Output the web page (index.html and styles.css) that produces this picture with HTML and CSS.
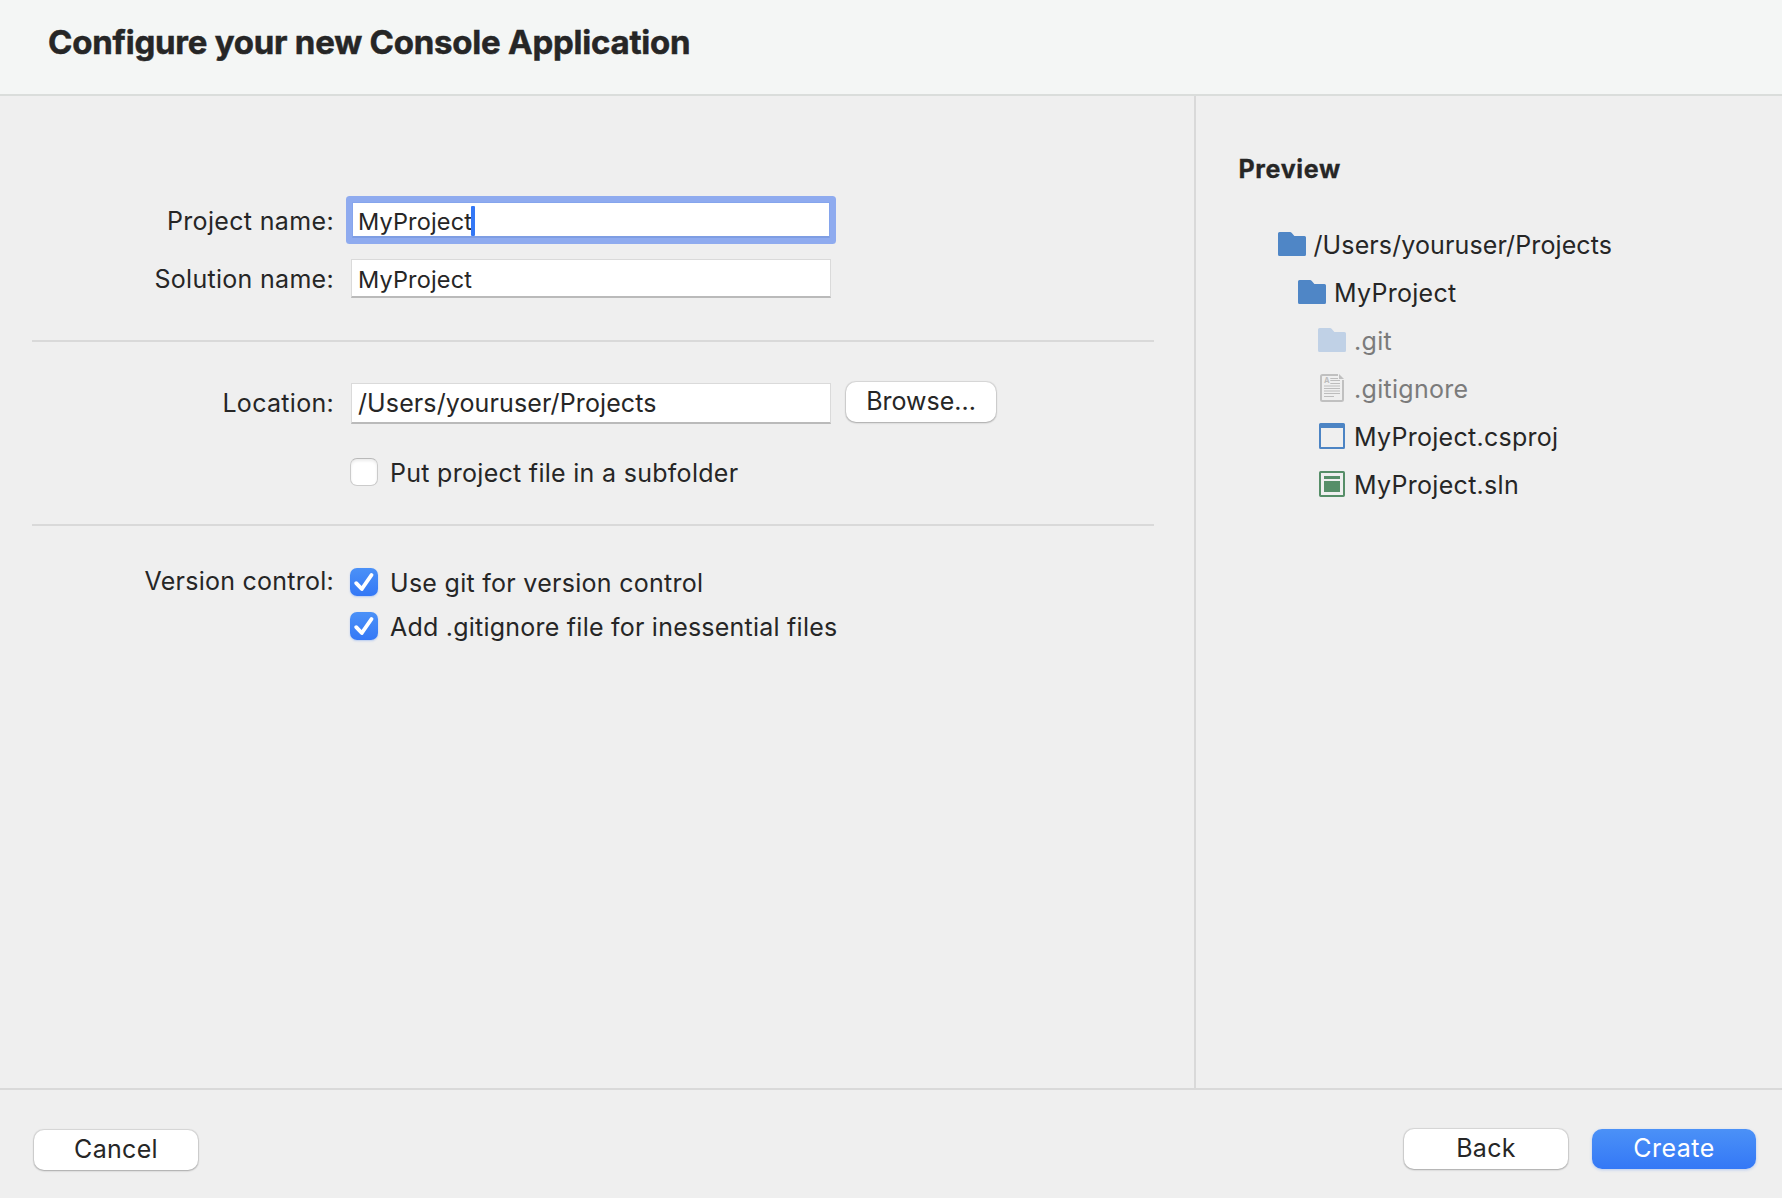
FILE: index.html
```html
<!DOCTYPE html>
<html lang="en">
<head>
<meta charset="utf-8">
<title>Configure your new Console Application</title>
<link rel="stylesheet" href="styles.css">
</head>
<body>
<svg class="defs" width="0" height="0" aria-hidden="true">
  <symbol id="folder" viewBox="0 0 28 28">
    <path d="M1.500 2H12Q13 2 13.800 2.900L16.400 6H26.500Q28 6 28 7.500V24.500Q28 26 26.500 26H1.500Q0 26 0 24.500V3.500Q0 2 1.500 2Z" fill="currentColor"/>
  </symbol>
  <symbol id="check" viewBox="0 0 28 28">
    <path d="M6.200 15.200L11.800 21L21.500 7" fill="none" stroke="#fff" stroke-width="3.900" stroke-linecap="round" stroke-linejoin="round"/>
  </symbol>
</svg>
<div class="window">
  <header class="header"><h1 class="title">Configure your new Console Application</h1></header>
  <main class="main">
    <form class="form">
      <section class="section names">
        <div class="row">
          <label class="label label-project">Project name:</label>
          <div class="field small focused"><span>MyProject</span><i class="caret"></i></div>
        </div>
        <div class="row">
          <label class="label">Solution name:</label>
          <div class="field small"><span>MyProject</span></div>
        </div>
      </section>
      <section class="section location">
        <div class="row">
          <label class="label">Location:</label>
          <div class="field path"><span>/Users/youruser/Projects</span></div>
          <button class="button browse" type="button">Browse...</button>
        </div>
        <div class="option">
          <span class="box"></span>
          <span class="option-text subfolder">Put project file in a subfolder</span>
        </div>
      </section>
      <section class="section version">
        <label class="label label-version">Version control:</label>
        <div class="options">
          <div class="option">
            <span class="box checked"><svg width="28" height="28"><use href="#check"/></svg></span>
            <span class="option-text">Use git for version control</span>
          </div>
          <div class="option">
            <span class="box checked"><svg width="28" height="28"><use href="#check"/></svg></span>
            <span class="option-text ignore">Add .gitignore file for inessential files</span>
          </div>
        </div>
      </section>
    </form>
    <aside class="preview">
      <h2 class="preview-title">Preview</h2>
      <ul class="tree">
        <li class="node depth-0"><svg class="icon folder" width="28" height="28"><use href="#folder"/></svg><span class="name root">/Users/youruser/Projects</span></li>
        <li class="node depth-1"><svg class="icon folder" width="28" height="28"><use href="#folder"/></svg><span class="name">MyProject</span></li>
        <li class="node depth-2 muted"><svg class="icon folder" width="28" height="28"><use href="#folder"/></svg><span class="name git">.git</span></li>
        <li class="node depth-2 muted">
          <svg class="icon" width="28" height="28" viewBox="0 0 28 28">
            <path d="M20 1H4.500Q3 1 3 2.500V25.500Q3 27 4.500 27H23.500Q25 27 25 25.500V6" fill="none" stroke="#c0c0c0" stroke-width="2"/>
            <path d="M21 0L26 5H21Z" fill="#c0c0c0"/>
            <path d="M12.300 4.500H20M12.300 6.500H22M12.300 9.500H22M6 12H22M6 14.500H22M6 17H22M6 19.500H22M6 22.500H16" stroke="#bdbdbd" stroke-width="1.200"/>
            <text class="glyph" x="6" y="9">A</text>
          </svg>
          <span class="name gitignore">.gitignore</span></li>
        <li class="node depth-2">
          <svg class="icon" width="28" height="28" viewBox="0 0 28 28">
            <path d="M2.500 1H25.500Q27 1 27 2.500V25.500Q27 27 25.500 27H2.500Q1 27 1 25.500V2.500Q1 1 2.500 1ZM3 6V25H25V6Z" fill="#4c84c4" fill-rule="evenodd"/>
          </svg>
          <span class="name">MyProject.csproj</span></li>
        <li class="node depth-2">
          <svg class="icon" width="28" height="28" viewBox="0 0 28 28">
            <rect x="2" y="2" width="24" height="24" rx="0.700" fill="none" stroke="#568e68" stroke-width="2"/>
            <path d="M6 6H22V9H6ZM6 11H22V22H6Z" fill="#568e68"/>
          </svg>
          <span class="name sln">MyProject.sln</span></li>
      </ul>
    </aside>
  </main>
  <footer class="footer">
    <button class="button cancel" type="button">Cancel</button>
    <div class="actions">
      <button class="button" type="button">Back</button>
      <button class="button primary" type="button">Create</button>
    </div>
  </footer>
</div>
</body>
</html>
```
FILE: styles.css
```css
* { box-sizing: border-box; }

body {
  margin: 0;
  background: #efefef;
  color: #262626;
  font-family: Inter, "Liberation Sans", sans-serif;
  font-size: 25px;
  line-height: 30px;
  letter-spacing: 0.3px;
  white-space: nowrap;
}

.defs { display: none; }

.window {
  width: 1782px;
  height: 1198px;
  display: grid;
  grid-template-rows: 96px 992px 110px;
  overflow: hidden;
}

.header {
  padding: 22px 48px 0;
  background: #f4f6f5;
  border-bottom: 2px solid #dadddb;
}

.title {
  margin: 0;
  font-size: 33px;
  line-height: 40px;
  font-weight: 700;
  letter-spacing: -0.232px;
  -webkit-text-stroke: 0.5px currentColor;
}

.main {
  display: grid;
  grid-template-columns: 1194px 1fr;
}

.form { padding: 0 40px 0 32px; }

.section { border-bottom: 2px solid #d9d9d9; }

.names { height: 246px; padding-top: 106px; }
.location { height: 184px; padding-top: 41px; }
.version { display: flex; gap: 16px; padding-top: 40px; border-bottom: 0; }

.row { display: flex; align-items: flex-start; }
.names .row + .row { margin-top: 21px; }

.label {
  width: 302px;
  margin-right: 17px;
  padding-top: 5px;
  text-align: right;
}
.label-project { padding-top: 4px; letter-spacing: 0.35px; }
.label-version { margin: 0; padding: 0; letter-spacing: 0.25px; }

.field {
  width: 480px;
  height: 39px;
  padding: 4px 0 0 6px;
  background: #fff;
  border: 1px solid #dadada;
  border-bottom: 2px solid #bababa;
  display: flex;
}
.path { height: 41px; letter-spacing: 0.114px; }
.small {
  padding-top: 5px;
  font-size: 23.5px;
  line-height: 29px;
  letter-spacing: 0.145px;
}
.focused {
  width: 478px;
  height: 36px;
  margin-left: 1px;
  padding: 4px 0 0 5px;
  border: 1px solid #85a5ed;
  border-bottom: 2px solid #7e9de3;
  box-shadow: 0 0 0 6px #8fabef;
  border-radius: 1px;
}
.caret {
  width: 4px;
  height: 30px;
  margin: -1px 0 0 -1px;
  border-radius: 1px;
  background: #3478f6;
}

.button {
  width: 164px;
  height: 40px;
  padding: 4px 0 6px;
  border: 0;
  border-radius: 10px;
  background: #fff;
  box-shadow: 0 0 1px 0.500px rgba(0, 0, 0, 0.1), 0 1px 2px rgba(0, 0, 0, 0.22);
  color: inherit;
  font: inherit;
  letter-spacing: 0.3px;
  text-align: center;
}
.browse { width: 150px; margin: -1px 0 0 15px; letter-spacing: 0; }
.primary {
  background: linear-gradient(#4b91f7, #3478f6);
  box-shadow: 0 1px 3px rgba(52, 120, 246, 0.3);
  color: #fff;
  letter-spacing: 0.45px;
}

.option { display: flex; gap: 12px; letter-spacing: 0.279px; }
.location .option { margin: 34px 0 0 318px; }
.options .option + .option { margin-top: 16px; }
.options { padding-top: 2px; }
.option-text { height: 28px; }
.subfolder { letter-spacing: 0.29px; }
.ignore { letter-spacing: 0.23px; }

.box {
  width: 28px;
  height: 28px;
  border-radius: 7px;
  background: #fff;
  border: 1px solid #cbcbcb;
  border-top-color: #b9b9b9;
  box-shadow: inset 0 2px 3px rgba(0, 0, 0, 0.08);
}
.checked {
  border: 0;
  background: linear-gradient(#4b91f7, #3478f6);
  box-shadow: 0 1px 2px rgba(52, 120, 246, 0.3);
}
.checked svg { display: block; }

.preview {
  padding: 58px 0 0 42.5px;
  border-left: 2px solid #d9d9d9;
}
.preview-title {
  margin: 0;
  font-size: 25px;
  font-weight: 700;
  letter-spacing: 0.66px;
  -webkit-text-stroke: 0.3px currentColor;
}
.tree { list-style: none; margin: 36px 0 0 -0.5px; padding: 0; }
.node {
  height: 48px;
  display: flex;
  align-items: center;
  gap: 8px;
}
.depth-0 { padding-left: 40px; gap: 7.5px; }
.depth-1 { padding-left: 60px; }
.depth-2 { padding-left: 80px; }
.icon { flex: none; }
.folder { color: #4f86c6; }
.muted { color: #7b7b7b; }
.muted .folder { color: #c0d1e6; }
.glyph { font-size: 7.5px; font-weight: 700; letter-spacing: 0; fill: #bdbdbd; }
.name { padding-top: 2px; letter-spacing: 0.28px; }
.root { letter-spacing: 0.114px; }
.git { letter-spacing: 0.3px; }
.gitignore { letter-spacing: 0.3px; }
.sln { letter-spacing: 0.3px; }

.footer {
  display: flex;
  justify-content: space-between;
  align-items: flex-start;
  padding: 39px 26px 0 34px;
  border-top: 2px solid #d9d9d9;
}
.cancel { margin-top: 1px; }
.actions { display: flex; gap: 24px; }
```
